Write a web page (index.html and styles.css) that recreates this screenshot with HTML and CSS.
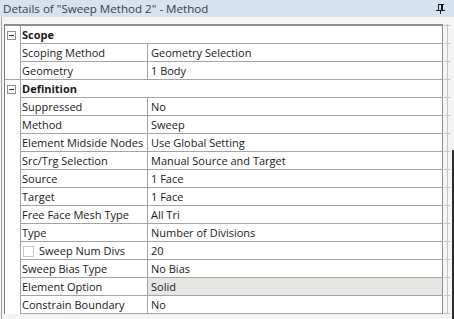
FILE: index.html
```html
<!DOCTYPE html>
<html>
<head>
  <meta name="viewport" content="width=device-width, initial-scale=1.0">
  <title>Details of "Sweep Method 2" - Method</title>
  <link rel="stylesheet" href="styles.css">
</head>

<body>
  <div class="pane">
    <div class="titlebar">
      <span class="title">Details of "Sweep Method 2" - Method</span>
      <svg class="pin" width="9" height="10" viewBox="0 0 9 10">
        <rect x="2" y="0" width="6" height="1" fill="#1a1a1a"/>
        <rect x="2" y="1" width="1" height="5" fill="#1a1a1a"/>
        <rect x="5" y="1" width="2" height="5" fill="#1a1a1a"/>
        <rect x="0" y="6" width="9" height="1" fill="#1a1a1a"/>
        <rect x="4" y="7" width="1" height="3" fill="#1a1a1a"/>
      </svg>
    </div>

    <div class="content">
      <div class="grid">
        <div class="row head">
          <div class="gutter"><span class="toggle"></span></div>
          <div class="cell group">Scope</div>
        </div>
        <div class="row">
          <div class="gutter"></div>
          <div class="cell name">Scoping Method</div>
          <div class="cell value">Geometry Selection</div>
        </div>
        <div class="row">
          <div class="gutter"></div>
          <div class="cell name">Geometry</div>
          <div class="cell value">1 Body</div>
        </div>
        <div class="row head">
          <div class="gutter"><span class="toggle"></span></div>
          <div class="cell group">Definition</div>
        </div>
        <div class="row">
          <div class="gutter"></div>
          <div class="cell name">Suppressed</div>
          <div class="cell value">No</div>
        </div>
        <div class="row">
          <div class="gutter"></div>
          <div class="cell name">Method</div>
          <div class="cell value">Sweep</div>
        </div>
        <div class="row">
          <div class="gutter"></div>
          <div class="cell name">Element Midside Nodes</div>
          <div class="cell value">Use Global Setting</div>
        </div>
        <div class="row">
          <div class="gutter"></div>
          <div class="cell name">Src/Trg Selection</div>
          <div class="cell value">Manual Source and Target</div>
        </div>
        <div class="row">
          <div class="gutter"></div>
          <div class="cell name">Source</div>
          <div class="cell value">1 Face</div>
        </div>
        <div class="row">
          <div class="gutter"></div>
          <div class="cell name">Target</div>
          <div class="cell value">1 Face</div>
        </div>
        <div class="row">
          <div class="gutter"></div>
          <div class="cell name">Free Face Mesh Type</div>
          <div class="cell value">All Tri</div>
        </div>
        <div class="row">
          <div class="gutter"></div>
          <div class="cell name">Type</div>
          <div class="cell value">Number of Divisions</div>
        </div>
        <div class="row">
          <div class="gutter"></div>
          <div class="cell name"><span class="check"></span>Sweep Num Divs</div>
          <div class="cell value">20</div>
        </div>
        <div class="row">
          <div class="gutter"></div>
          <div class="cell name">Sweep Bias Type</div>
          <div class="cell value">No Bias</div>
        </div>
        <div class="row">
          <div class="gutter"></div>
          <div class="cell name">Element Option</div>
          <div class="cell value selected">Solid</div>
        </div>
        <div class="row">
          <div class="gutter"></div>
          <div class="cell name">Constrain Boundary</div>
          <div class="cell value">No</div>
        </div>
      </div>
      <div class="ruler"></div>
    </div>
  </div>
</body>
</html>
```

FILE: styles.css
```css
body {
  margin: 0;
  padding: 0;
  background-color: #f2f2f2;
  font-family: "Open Sans", "Noto Sans", sans-serif;
  font-size: 11px;
  color: #1a1a1a;
}

.pane {
  width: 454px;
  height: 319px;
  display: flex;
  flex-direction: column;
  background:
    linear-gradient(#2e2e2e, #2e2e2e) right 0 top 150px / 2px 100% no-repeat,
    #f4f4f4;
}

.titlebar {
  height: 17px;
  display: flex;
  align-items: center;
  justify-content: space-between;
  padding: 0 9px 0 3px;
  background-color: #d6e2ef;
  color: #404040;
  font-size: 11.6px;
}

.pin {
  display: block;
  margin-top: 1px;
}

.content {
  flex: 1;
  display: flex;
  align-items: flex-start;
  margin-left: 1px;
  padding-top: 7px;
  border-left: 1px solid #a3a3a3;
}

.grid {
  margin-left: 2px;
  width: 437px;
  background-color: #fff;
  border-top: 2px solid #8e8e8e;
  border-left: 1px solid #7c7c7c;
  border-right: 1px solid #8e8e8e;
}

.row {
  display: flex;
  height: 18px;
}

.gutter {
  width: 15px;
  height: 18px;
  flex-shrink: 0;
}

.head:not(:first-child) .gutter {
  box-shadow: 0 -1px 0 #a4a4a4;
}

.toggle {
  display: block;
  position: relative;
  width: 9px;
  height: 9px;
  box-sizing: border-box;
  margin: 5px 0 0 2px;
  border: 1px solid #8f8f8f;
  background-color: #fff;
}

.toggle::after {
  content: "";
  position: absolute;
  left: 1px;
  top: 3px;
  width: 5px;
  height: 1px;
  background-color: #333;
}

.cell {
  box-sizing: border-box;
  height: 18px;
  line-height: 17px;
  border-left: 1px solid #a4a4a4;
  border-bottom: 1px solid #a4a4a4;
  white-space: nowrap;
  overflow: hidden;
}

.group {
  flex: 1;
  padding-left: 1px;
  font-weight: bold;
}

.name {
  width: 127px;
  padding-left: 1px;
  display: flex;
  align-items: center;
}

.value {
  width: 295px;
  padding-left: 3px;
}

.value.selected {
  background-color: #e6e6e2;
}

.check {
  width: 11px;
  height: 11px;
  box-sizing: border-box;
  margin: 2px 5px 0 1px;
  border: 1px solid #c6c6c6;
  background-color: #fff;
}

.ruler {
  width: 9px;
  height: 290px;
  background:
    linear-gradient(#c4c4c4, #c4c4c4) 4px 0 / 1px 100% no-repeat,
    repeating-linear-gradient(transparent 0 1px, #c4c4c4 1px 2px, transparent 2px 18px) 1px 0 / 6px 100% no-repeat;
}
```
